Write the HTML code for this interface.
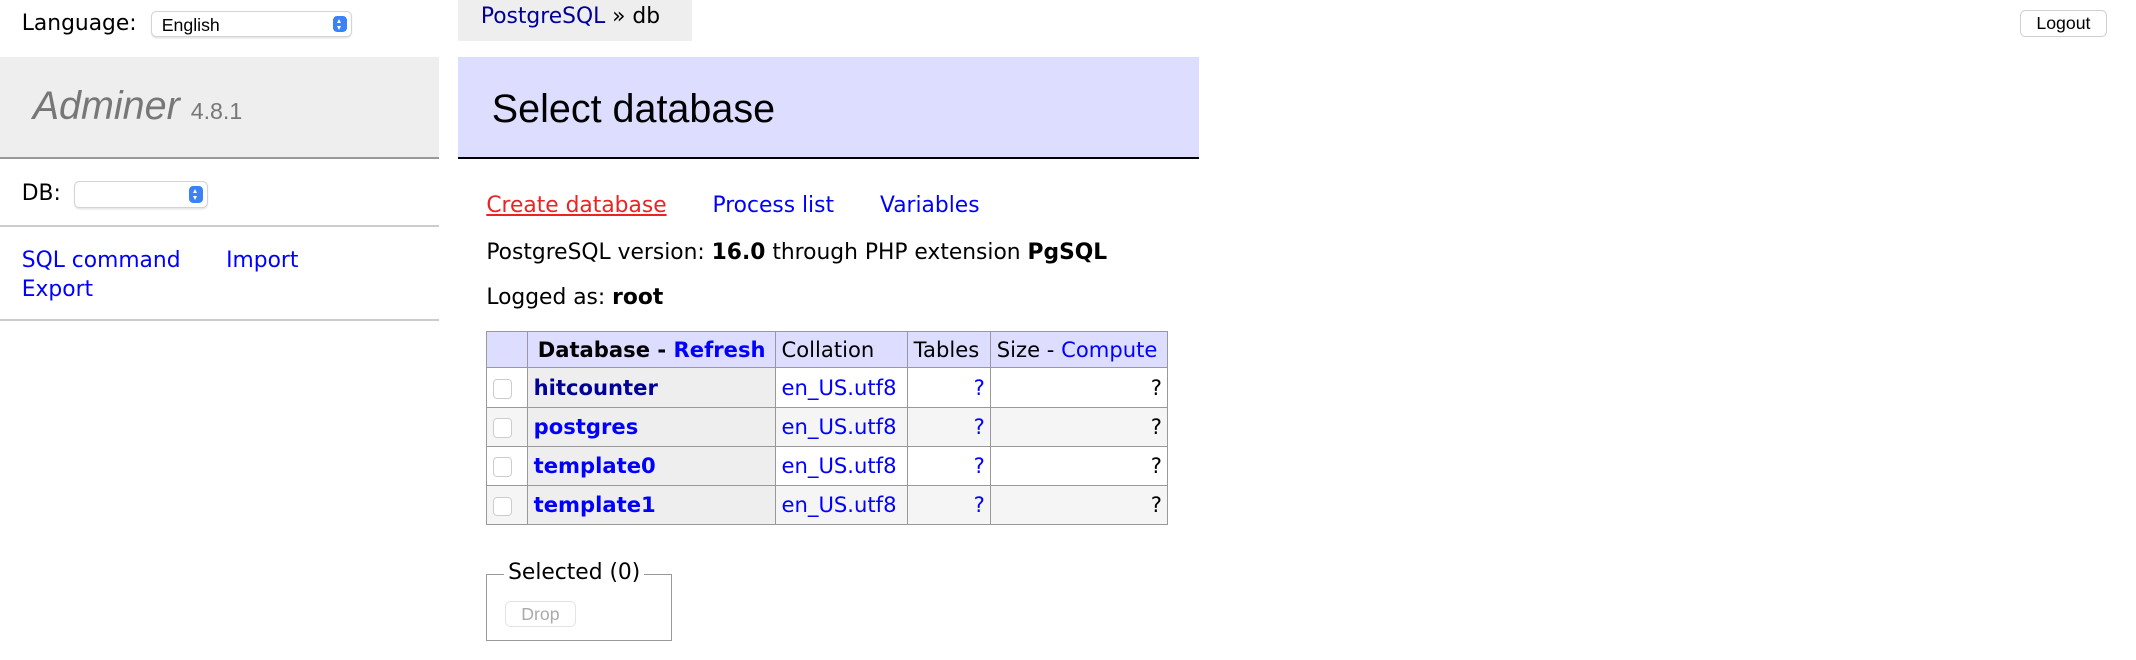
<!DOCTYPE html>
<html><head><meta charset="utf-8"><style>
html,body{margin:0;padding:0;background:#fff;}
body{width:1568px;height:484px;zoom:1.36224;font-family:"DejaVu Sans",Verdana,sans-serif;font-size:16px;color:#000;position:relative;overflow:hidden;}
a{color:#00f;text-decoration:none;}
.abs{position:absolute;white-space:nowrap;}
.sel{position:absolute;background:#fff;border:1px solid #d4d4d4;border-radius:4px;box-shadow:0 1px 1px rgba(0,0,0,.1);font-size:13px;font-family:"Liberation Sans",sans-serif;}
.arr{position:absolute;right:3px;top:3px;width:10px;height:12px;background:#3b82f6;border-radius:3px;}
.arr:before,.arr:after{content:"";position:absolute;left:3px;border-left:2px solid transparent;border-right:2px solid transparent;}
.arr:before{top:2px;border-bottom:3px solid #fff;}
.arr:after{bottom:2px;border-top:3px solid #fff;}
table{position:absolute;left:357px;top:243px;border-collapse:collapse;border:1px solid #999;table-layout:fixed;width:500px;}
td,th{border:1px solid #999;padding:0 4px;height:28px;font-size:15.5px;white-space:nowrap;overflow:hidden;}
thead th,thead td{background:#ddf;height:26px;}
tbody th{background:#eee;text-align:left;font-weight:bold;}
tbody tr:nth-child(even) td{background:#f5f5f5;}
.cb{display:inline-block;width:13px;height:13px;border:1px solid #ccc;border-radius:3px;background:#fff;vertical-align:middle;}
</style></head><body>
<div class="abs" style="left:16px;top:8px;">Language:</div>
<div class="sel" style="left:111px;top:8px;width:146px;height:18px;"><span style="position:absolute;left:7px;top:2px;">English</span><div class="arr"></div></div>

<div class="abs" style="left:0;top:42px;width:322px;height:73px;background:#eee;border-bottom:2px solid #999;"></div>
<div class="abs" style="left:24px;top:62px;font-size:29px;font-style:italic;color:#777;font-family:'Liberation Sans',sans-serif;">Adminer <span style="font-size:17px;font-style:normal;">4.8.1</span></div>

<div class="abs" style="left:16px;top:133px;">DB:</div>
<div class="sel" style="left:54px;top:133px;width:97px;height:18px;"><div class="arr"></div></div>
<div class="abs" style="left:0;top:165px;width:322px;border-top:2px solid #ccc;"></div>
<div class="abs" style="left:16px;top:182px;"><a href="#">SQL command</a></div>
<div class="abs" style="left:166px;top:182px;"><a href="#">Import</a></div>
<div class="abs" style="left:16px;top:203px;"><a href="#">Export</a></div>
<div class="abs" style="left:0;top:234px;width:322px;border-top:2px solid #ccc;"></div>

<div class="abs" style="left:336px;top:0;width:172px;height:30px;background:#eee;"></div>
<div class="abs" style="left:353px;top:3px;"><a href="#" style="color:#009;">PostgreSQL</a> » db</div>
<div class="abs" style="left:1483px;top:7px;width:62px;height:19px;border:1px solid #d0d0d0;border-radius:4px;background:#fff;font-size:13px;text-align:center;line-height:19px;font-family:'Liberation Sans',sans-serif;">Logout</div>

<div class="abs" style="left:336px;top:42px;width:544px;height:73px;background:#ddf;border-bottom:2px solid #000;"></div>
<div class="abs" style="left:361px;top:64px;font-size:29px;font-family:'Liberation Sans',sans-serif;">Select database</div>

<div class="abs" style="left:357px;top:142px;"><a href="#" style="color:#e22;text-decoration:underline;">Create database</a></div>
<div class="abs" style="left:523px;top:142px;"><a href="#">Process list</a></div>
<div class="abs" style="left:646px;top:142px;"><a href="#">Variables</a></div>
<div class="abs" style="left:357px;top:176px;">PostgreSQL version: <b>16.0</b> through PHP extension <b>PgSQL</b></div>
<div class="abs" style="left:357px;top:209px;">Logged as: <b>root</b></div>

<table>
<colgroup><col style="width:30px"><col style="width:182px"><col style="width:97px"><col style="width:61px"><col style="width:130px"></colgroup>
<thead><tr><td></td><th style="text-align:center;">Database - <a href="#">Refresh</a></th><td>Collation</td><td>Tables</td><td>Size - <a href="#">Compute</a></td></tr></thead>
<tbody>
<tr><td><span class="cb"></span></td><th><a href="#" style="color:#009;">hitcounter</a></th><td><a href="#">en_US.utf8</a></td><td style="text-align:right;"><a href="#">?</a></td><td style="text-align:right;">?</td></tr>
<tr><td><span class="cb"></span></td><th><a href="#">postgres</a></th><td><a href="#">en_US.utf8</a></td><td style="text-align:right;"><a href="#">?</a></td><td style="text-align:right;">?</td></tr>
<tr><td><span class="cb"></span></td><th><a href="#">template0</a></th><td><a href="#">en_US.utf8</a></td><td style="text-align:right;"><a href="#">?</a></td><td style="text-align:right;">?</td></tr>
<tr><td><span class="cb"></span></td><th><a href="#">template1</a></th><td><a href="#">en_US.utf8</a></td><td style="text-align:right;"><a href="#">?</a></td><td style="text-align:right;">?</td></tr>
</tbody></table>

<div class="abs" style="left:357px;top:421px;width:135px;height:48px;border:1px solid #999;"></div>
<div class="abs" style="left:370px;top:411px;background:#fff;padding:0 3px;">Selected (0)</div>
<div class="abs" style="left:371px;top:441px;width:50px;height:18px;border:1px solid #e4e4e4;border-radius:4px;font-size:13px;color:#aaa;text-align:center;line-height:18px;font-family:'Liberation Sans',sans-serif;">Drop</div>
</body></html>
